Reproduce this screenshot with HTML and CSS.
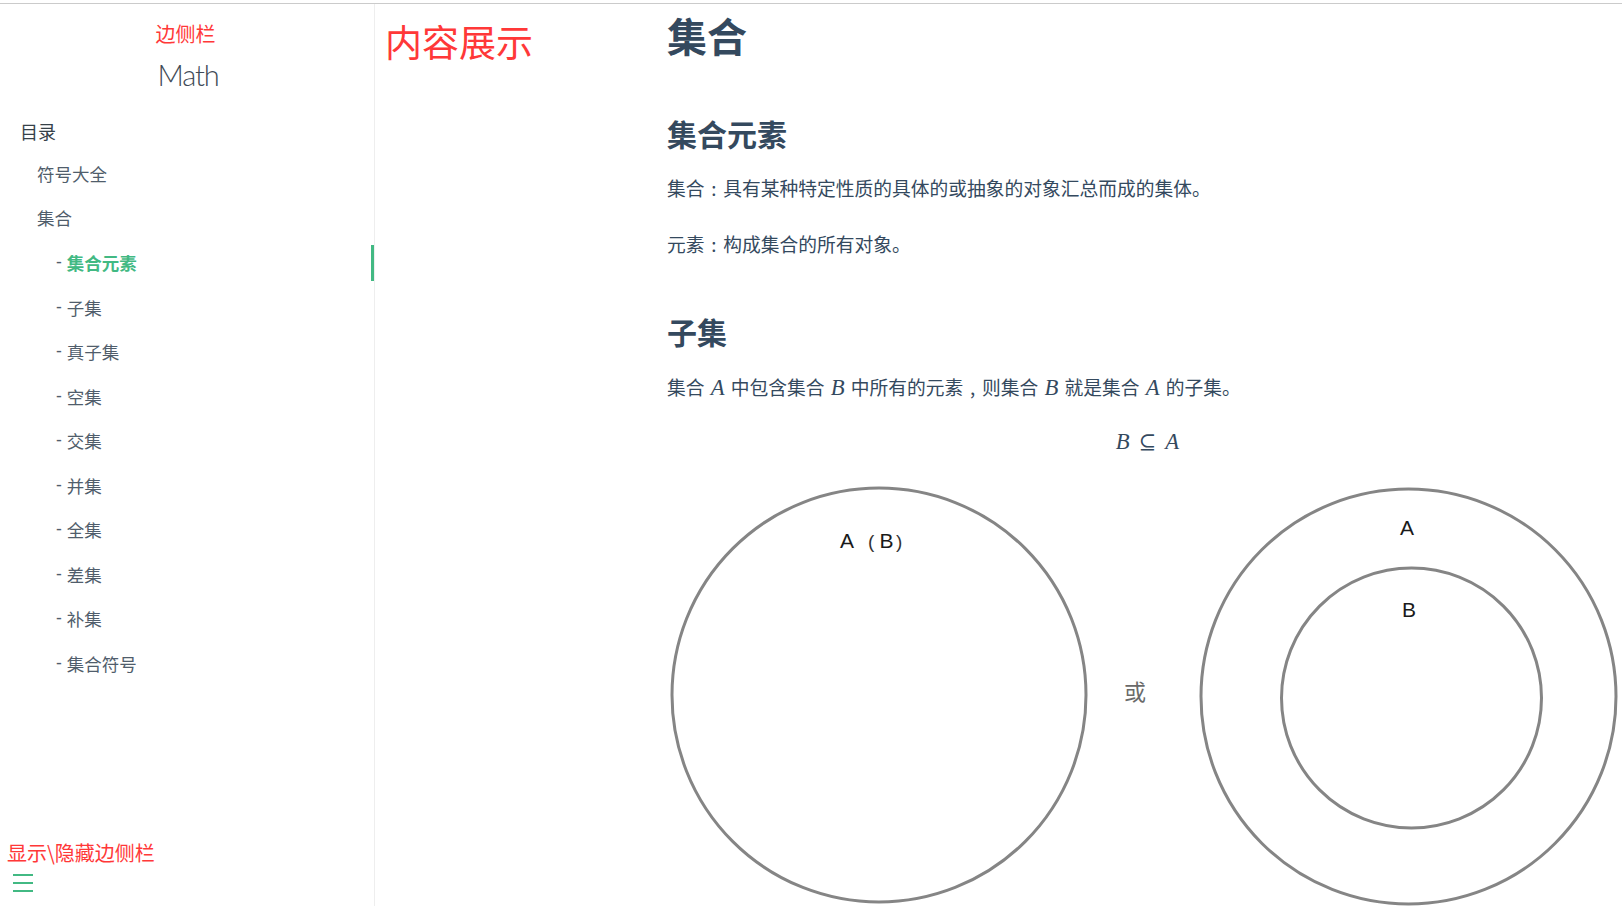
FILE: index.html
```html
<!DOCTYPE html>
<html lang="zh-CN">
<head>
<meta charset="utf-8">
<title>Math</title>
<link rel="stylesheet" href="styles.css">
</head>
<body>
<div class="topline"></div>
<div class="app">
  <aside class="sidebar">
    <div class="note note-side">边侧栏</div>
    <h1 class="app-name">Math</h1>
    <div class="toc-title">目录</div>
    <ul class="toc">
      <li><a>符号大全</a></li>
      <li><a>集合</a>
        <ul class="sub">
          <li class="active"><span class="dash">- </span><a>集合元素</a></li>
          <li><span class="dash">- </span><a>子集</a></li>
          <li><span class="dash">- </span><a>真子集</a></li>
          <li><span class="dash">- </span><a>空集</a></li>
          <li><span class="dash">- </span><a>交集</a></li>
          <li><span class="dash">- </span><a>并集</a></li>
          <li><span class="dash">- </span><a>全集</a></li>
          <li><span class="dash">- </span><a>差集</a></li>
          <li><span class="dash">- </span><a>补集</a></li>
          <li><span class="dash">- </span><a>集合符号</a></li>
        </ul>
      </li>
    </ul>
    <div class="toggle">
      <div class="note note-toggle">显示\隐藏边侧栏</div>
      <button class="burger" type="button" aria-label="toggle"><span></span><span></span><span></span></button>
    </div>
  </aside>
  <div class="label-col">
    <div class="note note-content">内容展示</div>
  </div>
  <main class="content">
    <h1 class="h1">集合</h1>
    <h3 class="h3 h3-first">集合元素</h3>
    <p class="p p-first">集合<span class="fw">:</span>具有某种特定性质的具体的或抽象的对象汇总而成的集体。</p>
    <p class="p">元素<span class="fw">:</span>构成集合的所有对象。</p>
    <h3 class="h3 h3-second">子集</h3>
    <p class="p p-third">集合 <i class="m">A</i> 中包含集合 <i class="m">B</i> 中所有的元素<span class="fw">,</span>则集合 <i class="m">B</i> 就是集合 <i class="m">A</i> 的子集。</p>
    <div class="display"><i class="m">B</i><span class="rel">⊆</span><i class="m">A</i></div>
    <svg class="venn" width="955" height="426" viewBox="0 0 955 426" xmlns="http://www.w3.org/2000/svg">
      <circle cx="212" cy="215" r="207" fill="none" stroke="#858585" stroke-width="3"/>
      <text y="68" class="vt"><tspan x="173">A</tspan><tspan x="201" class="paren">(</tspan><tspan x="212.5">B</tspan><tspan x="229" class="paren">)</tspan></text>
      <text x="457" y="220" class="vor">或</text>
      <circle cx="741.5" cy="216.5" r="207.5" fill="none" stroke="#858585" stroke-width="3"/>
      <circle cx="744.5" cy="218" r="130" fill="none" stroke="#858585" stroke-width="3"/>
      <text x="733" y="55" class="vt">A</text>
      <text x="735" y="137" class="vt">B</text>
    </svg>
  </main>
</div>
</body>
</html>
```
FILE: styles.css
```css
html, body {
  margin: 0;
  padding: 0;
  overflow: hidden;
  background: #fff;
}
body {
  width: 1622px;
  height: 906px;
  font-family: "Noto Sans CJK SC", sans-serif;
  color: #34495e;
}
.topline {
  height: 3px;
  border-bottom: 1px solid #cbcbcb;
}
.app {
  display: flex;
  height: 902px;
  overflow: hidden;
}
.note {
  color: #ff3838;
  font-family: "Noto Sans CJK SC", sans-serif;
}

/* sidebar */
.sidebar {
  width: 374px;
  flex-shrink: 0;
  border-right: 1px solid #eeeeee;
  display: flex;
  flex-direction: column;
}
.note-side {
  font-size: 20px;
  line-height: 28px;
  margin-top: 16px;
  text-align: center;
  padding-right: 3px;
}
.app-name {
  margin: 7px 0 0;
  font-family: "Lato", "Open Sans", sans-serif;
  font-weight: 300;
  font-size: 29px;
  letter-spacing: -1.2px;
  line-height: 40px;
  text-align: center;
  color: #3f4b57;
  padding-left: 2px;
}
.toc-title {
  margin-top: 18px;
  padding-left: 20px;
  font-size: 18px;
  line-height: 36px;
  color: #364149;
}
.toc, .sub {
  list-style: none;
  margin: 0;
  padding: 0;
  display: flex;
  flex-direction: column;
}
.toc {
  margin-top: 2.25px;
}
.toc li {
  font-size: 17.5px;
  color: #505d6b;
}
.toc > li > a {
  display: block;
  line-height: 36px;
  margin: 4.25px 0;
  padding-left: 37px;
}
.sub li {
  display: flex;
  align-items: center;
  height: 36px;
  margin: 4.25px 0;
  padding-left: 56px;
}
.sub li .dash {
  font-family: "Liberation Sans", sans-serif;
  white-space: pre;
}
.sub li.active {
  border-right: 3px solid #42b983;
}
.sub li.active a {
  color: #42b983;
  font-weight: 700;
}
.toggle {
  margin-top: auto;
  padding: 0 0 14px 7px;
}
.note-toggle {
  font-size: 20px;
  line-height: 28px;
}
.burger {
  display: flex;
  flex-direction: column;
  gap: 6px;
  margin: 7.5px 0 0 6px;
  padding: 0;
  border: 0;
  background: transparent;
  width: 20px;
}
.burger span {
  display: block;
  width: 20px;
  height: 2px;
  background: #42b983;
}

/* label column */
.label-col {
  width: 292px;
  flex-shrink: 0;
  padding-left: 10px;
  box-sizing: border-box;
}
.note-content {
  font-size: 37px;
  line-height: 44px;
  margin-top: 15px;
}

/* content */
.content {
  width: 961px;
  flex-shrink: 0;
}
.h1 {
  margin: 7px 0 0;
  font-size: 40px;
  line-height: 48px;
  font-weight: 700;
  color: #34495e;
}
.h3 {
  margin: 0;
  font-size: 30px;
  line-height: 40px;
  font-weight: 700;
  color: #34495e;
}
.h3-first { margin-top: 53.5px; }
.h3-second { margin-top: 51.5px; }
.p {
  margin: 24px 0 0;
  font-size: 18.75px;
  line-height: 32px;
  color: #34495e;
}
.p-first { margin-top: 19px; }
.p-third { margin-top: 20px; }
.fw {
  display: inline-block;
  width: 1em;
  text-align: center;
  font-family: "Noto Sans CJK SC", sans-serif;
}
.m {
  font-family: "Liberation Serif", "DejaVu Serif", serif;
  font-style: italic;
  font-size: 1.21em;
  line-height: 0;
}
.p .m {
  margin: 0 2px;
}
.display {
  margin-top: 21.5px;
  text-align: center;
  font-size: 18.75px;
  line-height: 32px;
  color: #34495e;
}
.display .rel {
  font-family: "DejaVu Serif", serif;
  font-size: 21px;
  margin: 0 9px;
}
.venn {
  display: block;
  margin-top: 22px;
}
.vt {
  font-family: "Liberation Sans", "Noto Sans CJK SC", sans-serif;
  font-size: 21px;
  fill: #1a1a1a;
}
.vt .paren {
  font-size: 19px;
  fill: #333;
}
.vor {
  font-family: "Noto Sans CJK SC", sans-serif;
  font-size: 22px;
  fill: #6a6a6a;
}
```
